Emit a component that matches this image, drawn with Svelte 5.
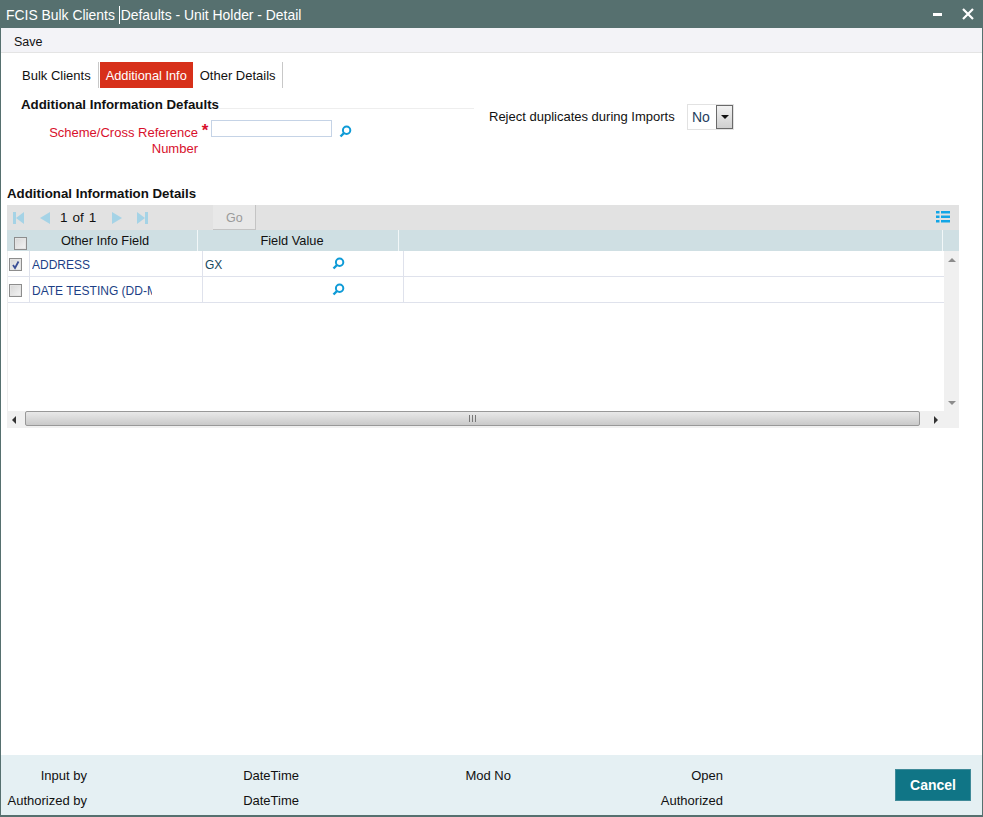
<script>
  const rows = [
    { name: 'ADDRESS', value: 'GX', checked: true },
    { name: 'DATE TESTING (DD-MM-YYYY)', value: '', checked: false }
  ];
  const audit = [
    ['Input by', 'DateTime', 'Mod No', 'Open'],
    ['Authorized by', 'DateTime', '', 'Authorized']
  ];
</script>

{#snippet lens(cls)}
  <svg class={cls} width="13" height="13" viewBox="0 0 13 13" aria-hidden="true">
    <circle cx="7.6" cy="5.2" r="3.7" fill="none" stroke="#0f9bd7" stroke-width="2" />
    <path d="M5 8 L1.5 11.5" stroke="#0f9bd7" stroke-width="2.4" />
  </svg>
{/snippet}

{#snippet check(on)}
  <span class="check">
    {#if on}
      <svg width="10" height="10" viewBox="0 0 10 10" aria-hidden="true"><path d="M2 5 L4 8 L7.5 1.5" fill="none" stroke="#3a4f96" stroke-width="1.8" /></svg>
    {/if}
  </span>
{/snippet}

<div class="window">
  <header class="title">
    <div class="title-text">FCIS Bulk Clients <span class="caret"></span>Defaults - Unit Holder - Detail</div>
    <div class="win-btns">
      <span class="min"></span>
      <svg width="12" height="12" viewBox="0 0 12 12" aria-hidden="true"><path d="M1 1 L11 11 M11 1 L1 11" stroke="#fff" stroke-width="2.2" /></svg>
    </div>
  </header>

  <div class="menu"><span>Save</span></div>

  <main class="content">
    <nav class="tabs">
      <span class="tab t1">Bulk Clients</span>
      <span class="tab active">Additional Info</span>
      <span class="tab t3">Other Details</span>
    </nav>

    <div class="form">
      <section class="left">
        <h2 class="sec-title">Additional Information Defaults</h2>
        <div class="field">
          <label class="req" for="scheme">Scheme/Cross Reference Number</label>
          <span class="star">*</span>
          <input id="scheme" class="text" type="text" />
          {@render lens('form-lens')}
        </div>
      </section>
      <section class="right">
        <span class="rej">Reject duplicates during Imports</span>
        <div class="select">
          <span class="sel-val">No</span>
          <span class="sel-btn"><i></i></span>
        </div>
      </section>
    </div>

    <h2 class="grid-title">Additional Information Details</h2>
    <div class="grid">
      <div class="pager">
        <div class="pager-left">
          <svg class="pg" width="12" height="14" viewBox="0 0 12 14" aria-hidden="true">
            <g fill="#a5d3e6">
              <rect x="0" y="1" width="3" height="12" /><path d="M11 1 V13 L3 7 Z" />
            </g>
          </svg>
          <svg class="pg2" width="14" height="14" viewBox="0 0 14 14" aria-hidden="true"><path d="M12 1 V13 L2 7 Z" fill="#a5d3e6" /></svg>
          <span class="count">1</span><span class="count of">of</span><span class="count">1</span>
          <svg class="pg3" width="14" height="14" viewBox="0 0 14 14" aria-hidden="true"><path d="M2 1 V13 L12 7 Z" fill="#a5d3e6" /></svg>
          <svg class="pg4" width="14" height="14" viewBox="0 0 14 14" aria-hidden="true"><path d="M1 1 V13 L9 7 Z" fill="#a5d3e6" /><rect x="9" y="1" width="3" height="12" fill="#a5d3e6" /></svg>
          <span class="go">Go</span>
        </div>
        <svg class="cols" width="14" height="12" viewBox="0 0 14 12" aria-hidden="true">
          <g fill="#12a5e6">
            <rect x="0" y="0" width="3.5" height="2.5" /><rect x="5" y="0" width="9" height="2.5" />
            <rect x="0" y="4.5" width="3.5" height="2.5" /><rect x="5" y="4.5" width="9" height="2.5" />
            <rect x="0" y="9" width="3.5" height="2.5" /><rect x="5" y="9" width="9" height="2.5" />
          </g>
        </svg>
      </div>

      <div class="head">
        <div class="hc hc-check">{@render check(false)}</div>
        <div class="hc hc-a">Other Info Field</div>
        <div class="hc hc-b">Field Value</div>
        <div class="hc hc-c"></div>
      </div>

      <div class="body">
        <div class="rows">
          {#each rows as r}
            <div class="row">
              <div class="c c-check">{@render check(r.checked)}</div>
              <div class="c c-a"><span class="clip">{r.name}</span></div>
              <div class="c c-b"><span class="val">{r.value}</span>{@render lens('row-lens')}</div>
              <div class="c c-c"></div>
            </div>
          {/each}
        </div>
        <div class="vscroll">
          <i class="up"></i>
          <i class="down"></i>
        </div>
      </div>

      <div class="hscroll">
        <span class="arrow-l"></span>
        <div class="thumb"><span class="grip"></span></div>
        <span class="arrow-r"></span>
      </div>
    </div>
  </main>

  <footer class="foot">
    <div class="audit">
      {#each audit as line}
        {#each line as t}
          <span class="aud">{t}</span>
        {/each}
      {/each}
    </div>
    <button class="cancel" type="button">Cancel</button>
  </footer>
</div>

<style>
  :global(body) { margin: 0; background: #fff; }
  .window {
    box-sizing: border-box;
    width: 983px;
    height: 817px;
    display: flex;
    flex-direction: column;
    border: solid #56706f;
    border-width: 0 1px 2px 1px;
    font: 14px/16px "Liberation Sans", Arial, sans-serif;
    color: #111;
    background: #fff;
    overflow: hidden;
  }
  .title {
    flex: 0 0 28px;
    margin: 0 -1px;
    background: #56706f;
    display: flex;
    align-items: center;
    justify-content: space-between;
    padding: 0 9px 0 6px;
    color: #fff;
  }
  .title-text { font-size: 13.9px; position: relative; top: 1px; white-space: nowrap; }
  .caret { display: inline-block; width: 1px; height: 18px; background: #fff; vertical-align: -4px; margin-right: 1px; }
  .win-btns { display: flex; align-items: center; gap: 20px; }
  .min { width: 9px; height: 3px; background: #fff; display: block; }

  .menu {
    flex: 0 0 25px;
    box-sizing: border-box;
    background: #f3f3f7;
    border-bottom: 1px solid #e4e4e4;
    padding: 6px 0 0 13px;
    font-size: 12.5px;
  }

  .content { flex: 1; min-height: 0; padding: 0 22px 0 6px; }
  .tabs { display: flex; height: 26px; margin: 9px 0 0 9px; }
  .tab { height: 26px; line-height: 27px; padding: 0 6px; white-space: nowrap; font-size: 13px; }
  .t1 { padding: 0 7px 0 6px; border-right: 1px solid #c8c8c8; }
  .tab.active { background: #d7301a; color: #fff; margin-left: 1px; font-size: 12.8px; }
  .t3 { padding-left: 7px; border-right: 1px solid #c8c8c8; }

  .form { display: flex; height: 95px; }
  .left { width: 467px; }
  .sec-title {
    margin: 0 0 0 14px;
    padding: 8px 0 0;
    font-size: 13.3px;
    line-height: 17px;
    font-weight: bold;
    border-bottom: 1px solid #eee;
    height: 12px;
    width: 453px;
    white-space: nowrap;
  }
  .field { display: flex; align-items: flex-start; margin-top: 11px; }
  .req {
    width: 191px;
    box-sizing: border-box;
    padding-left: 30px;
    margin-top: 5px;
    text-align: right;
    color: #d8102c;
    line-height: 16px;
    font-size: 13px;
  }
  .star { color: #d8102c; width: 12px; margin-top: 3px; text-align: center; font-size: 17px; font-weight: bold; margin-left: 1px; }
  .text {
    box-sizing: border-box;
    width: 121px;
    height: 17px;
    border: 1px solid #c5d3e6;
    background: #fff;
    padding: 0;
    margin: 0;
  }
  .form-lens { margin: 5px 0 0 7px; }
  .right { display: flex; align-items: flex-start; padding-top: 16px; margin-left: 15px; }
  .rej { line-height: 18px; margin-top: 4px; font-size: 13px; width: 198px; white-space: nowrap; }
  .select {
    box-sizing: border-box;
    width: 47px;
    height: 26px;
    border: 1px solid #e2e2e2;
    display: flex;
    align-items: center;
    justify-content: space-between;
    padding-left: 4px;
    font-size: 14px;
    color: #26415e;
  }
  .sel-btn {
    box-sizing: border-box;
    width: 17px;
    height: 24px;
    border: 1px solid #6a6a6a;
    background: linear-gradient(#f2f2f2, #cfcfcf);
    display: flex;
    align-items: center;
    justify-content: center;
  }
  .sel-btn i { border: 4px solid transparent; border-top: 4px solid #111; border-bottom: 0; }

  .grid-title { margin: 0 0 3px; font-size: 13.3px; line-height: 17px; font-weight: bold; height: 17px; padding-top: 2px; }
  .grid { width: 952px; }

  .pager {
    height: 25px;
    background: #e2e2e2;
    display: flex;
    justify-content: space-between;
    align-items: center;
    padding: 0 9px 0 6px;
  }
  .pager-left { display: flex; align-items: center; height: 25px; }
  .pg { margin-right: 13px; }
  .pg2 { margin-right: 8px; }
  .count { font-size: 13.5px; margin-right: 5px; }
  .pg3 { margin: 0 0 0 9px; }
  .pg4 { margin-left: 12px; }
  .go {
    box-sizing: border-box;
    width: 43px;
    height: 25px;
    margin-left: 63px;
    background: #e8e8e8;
    border-right: 1px solid #c4c4c4;
    border-bottom: 1px solid #c4c4c4;
    color: #9a9a9a;
    text-align: center;
    line-height: 26px;
    font-size: 12.5px;
  }
  .cols { margin-top: -2px; }

  .head { height: 21px; background: #cfdfe3; display: flex; }
  .hc { box-sizing: border-box; height: 21px; text-align: center; line-height: 22px; font-size: 12.8px; border-right: 1px solid #f2f7f8; }
  .hc-check { width: 21px; display: flex; align-items: center; justify-content: center; border-right: 0; padding: 6px 0 0 5px; }
  .hc-a { width: 170px; padding-right: 15px; }
  .hc-b { width: 201px; padding-right: 12px; }
  .hc-c { width: 544px; }

  .body { height: 160px; display: flex; border-left: 1px solid #eee; }
  .rows { flex: 1; min-width: 0; }
  .row { display: flex; height: 26px; box-sizing: border-box; border-bottom: 1px solid #dfe2ec; }
  .c { box-sizing: border-box; height: 25px; padding-top: 2px; border-right: 1px solid #dfe2ec; display: flex; align-items: center; font-size: 12px; color: #1d3f86; }
  .c-check { width: 22px; padding-left: 1px; }
  .c-a { width: 173px; padding-left: 2px; }
  .clip { width: 120px; overflow: hidden; white-space: nowrap; }
  .c-b { width: 201px; padding: 2px 58px 0 2px; justify-content: space-between; color: #17495e; }
  .c-c { flex: 1; border-right: 0; }
  .row-lens { margin-top: -2px; }
  .check {
    box-sizing: border-box;
    width: 13px;
    height: 13px;
    border: 1px solid #8d8d8d;
    background: linear-gradient(135deg, #d6d6d6, #f4f4f4);
    display: flex;
    align-items: center;
    justify-content: center;
    box-shadow: inset 0 0 0 1px #e4e4e4;
  }
  .vscroll {
    width: 15px;
    background: #f0f0f0;
    display: flex;
    flex-direction: column;
    justify-content: space-between;
    align-items: center;
    padding: 7px 0 6px;
    box-sizing: border-box;
  }
  .up { border: 4px solid transparent; border-bottom: 4px solid #8c8c8c; border-top: 0; }
  .down { border: 4px solid transparent; border-top: 4px solid #8c8c8c; border-bottom: 0; }

  .hscroll {
    height: 17px;
    background: #f0f0f0;
    display: flex;
    align-items: flex-start;
    padding-left: 5px;
    box-sizing: border-box;
  }
  .arrow-l { align-self: center; border: 4px solid transparent; border-right: 4px solid #333; border-left: 0; margin-right: 9px; }
  .arrow-r { align-self: center; border: 4px solid transparent; border-left: 4px solid #333; border-right: 0; margin-left: 14px; }
  .thumb {
    box-sizing: border-box;
    width: 895px;
    height: 15px;
    border: 1px solid #989898;
    border-radius: 2px;
    background: linear-gradient(#e9e9e9, #c9c9c9);
    display: flex;
    align-items: center;
    justify-content: center;
  }
  .grip { width: 7px; height: 7px; background: repeating-linear-gradient(90deg, #777 0 1px, transparent 1px 3px); }

  .foot {
    flex: 0 0 60px;
    background: #e5f0f3;
    display: flex;
    align-items: flex-start;
    justify-content: space-between;
    padding: 0 11px 0 6px;
  }
  .audit {
    display: grid;
    grid-template-columns: 80px 212px 212px 212px;
    grid-auto-rows: 25px;
    margin-top: 8px;
  }
  .aud { text-align: right; font-size: 13px; line-height: 25px; white-space: nowrap; }
  .cancel {
    width: 76px;
    height: 32px;
    margin-top: 14px;
    background: #107586;
    border: 1px solid #3f8a98;
    color: #fff;
    font: bold 14px "Liberation Sans", Arial, sans-serif;
    padding: 0;
  }
</style>
